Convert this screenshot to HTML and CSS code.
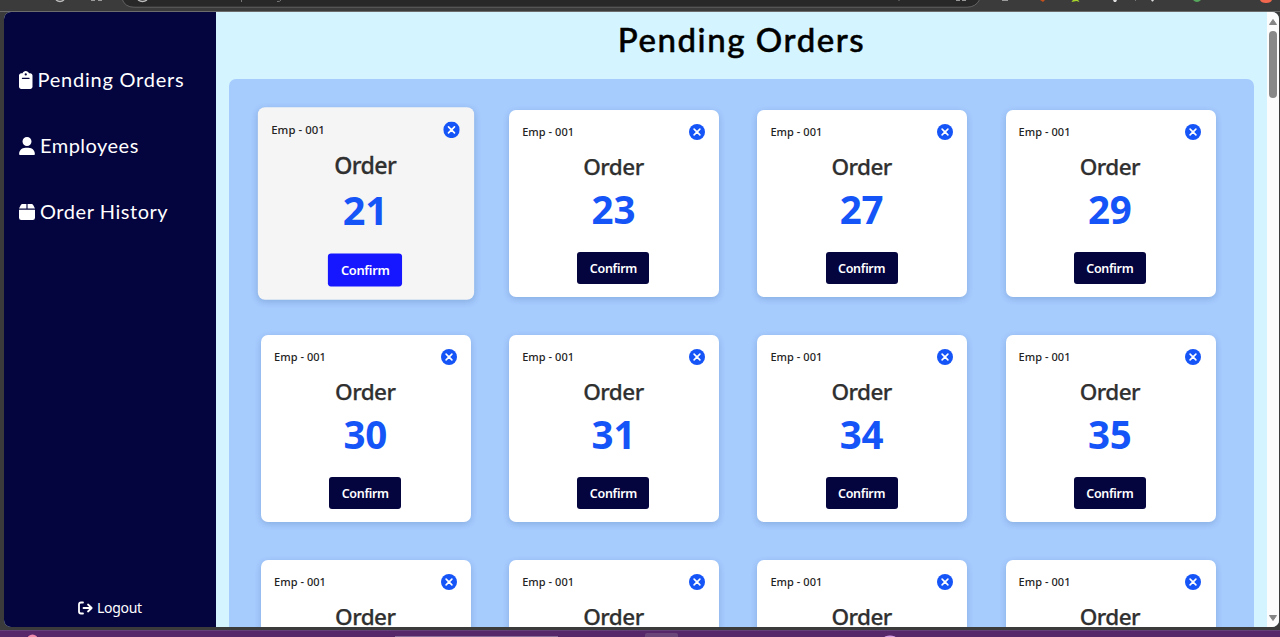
FILE: index.html
```html
<!DOCTYPE html>
<html lang="en">
<head>
<meta charset="utf-8">
<title>Pending Orders</title>
<link rel="stylesheet" href="styles.css">
</head>
<body>
<svg class="symbols" aria-hidden="true">
  <symbol id="close" viewBox="0 0 16 16"><circle cx="8" cy="8" r="8" fill="#1554f7"/><path d="M5.1 5.1l5.8 5.8M10.9 5.1l-5.8 5.8" stroke="#fff" stroke-width="1.6" stroke-linecap="round"/></symbol>
</svg>
<svg class="toolbar" viewBox="0 0 1280 12" aria-hidden="true">
  <rect y="11" width="1280" height="1" fill="#6c6c6c"/>
  <path d="M122 -1Q125 7.2 134 7.2H967Q976 7.2 980 -1Z" fill="#282828" stroke="#777" stroke-width=".7"/>
  <g fill="none" stroke="#bcbcbc" stroke-width="1.4">
    <path d="M56 0Q60 3 64 0M138 0Q142.500 3 147 0"/>
    <path d="M91 0h4M98 0h4M956 0h4M962 0h4M1002 0h6"/>
    <path d="M241.500 0v2M277 1.500Q280 2 281 0M899 0v1M1135.500 0v1" stroke="#777" stroke-width="1"/>
  </g>
  <path d="M1040 0h5l-2 2z" fill="#c4501c"/>
  <path d="M1071.500 2l2-3h4l2 3-3-1z" fill="#a9d62a"/>
  <path d="M1113 0h4l-1 2h-2zM1151 0h3l-1 1.500h-1z" fill="#ddd"/>
  <path d="M1193 0h8q-4 4-8 0z" fill="#55a85c"/>
  <path d="M1260 0h12q-1 3-6 3t-6-3z" fill="#f0674e"/>
</svg>
<div class="window">
  <nav class="sidebar">
    <ul class="menu">
      <li class="menu-item"><svg class="icon-clip" viewBox="0 0 384 512"><path fill="#fff" fill-rule="evenodd" d="M192 0c-42 0-77 27-90 64H64C29 64 0 93 0 128v320c0 35 29 64 64 64h256c35 0 64-29 64-64V128c0-35-29-64-64-64h-38C269 27 234 0 192 0zm0 64a32 32 0 110 64 32 32 0 010-64zM96 192h192q16 0 16 16t-16 16H96q-16 0-16-16t16-16z"/></svg><span class="wide">Pending Orders</span></li>
      <li class="menu-item"><svg class="icon-user" viewBox="0 0 448 512"><path fill="#fff" d="M224 256a128 128 0 100-256 128 128 0 000 256zm-46 48C80 304 0 384 0 482c0 16 13 30 30 30h388c17 0 30-14 30-30 0-98-80-178-178-178z"/></svg><span class="employees">Employees</span></li>
      <li class="menu-item"><svg class="icon-box" viewBox="0 0 448 448"><path fill="#fff" d="M51 26Q64 0 100 0h108v128H0zM240 0h108q36 0 49 26l51 102H240zM0 160h448v224q0 64-64 64H64q-64 0-64-64z"/></svg><span class="history">Order History</span></li>
    </ul>
    <div class="logout"><svg class="icon-logout" viewBox="0 0 15 14"><path d="M5 1.500H3Q1 1.500 1 3.500v7q0 2 2 2h2M5.500 7h8M10 3.500L13.700 7 10 10.500" fill="none" stroke="#fff" stroke-width="1.800" stroke-linecap="round" stroke-linejoin="round"/></svg><span>Logout</span></div>
  </nav>
  <main class="content">
    <h1 class="page-title"><span>Pending Orders</span></h1>
    <section class="board">
      <article class="card active"><header class="card-head"><span>Emp - 001</span><svg class="close"><use href="#close"/></svg></header><h2 class="label">Order</h2><p class="number">21</p><button class="confirm">Confirm</button></article>
      <article class="card"><header class="card-head"><span>Emp - 001</span><svg class="close"><use href="#close"/></svg></header><h2 class="label">Order</h2><p class="number">23</p><button class="confirm">Confirm</button></article>
      <article class="card"><header class="card-head"><span>Emp - 001</span><svg class="close"><use href="#close"/></svg></header><h2 class="label">Order</h2><p class="number">27</p><button class="confirm">Confirm</button></article>
      <article class="card"><header class="card-head"><span>Emp - 001</span><svg class="close"><use href="#close"/></svg></header><h2 class="label">Order</h2><p class="number">29</p><button class="confirm">Confirm</button></article>
      <article class="card"><header class="card-head"><span>Emp - 001</span><svg class="close"><use href="#close"/></svg></header><h2 class="label">Order</h2><p class="number">30</p><button class="confirm">Confirm</button></article>
      <article class="card"><header class="card-head"><span>Emp - 001</span><svg class="close"><use href="#close"/></svg></header><h2 class="label">Order</h2><p class="number">31</p><button class="confirm">Confirm</button></article>
      <article class="card"><header class="card-head"><span>Emp - 001</span><svg class="close"><use href="#close"/></svg></header><h2 class="label">Order</h2><p class="number">34</p><button class="confirm">Confirm</button></article>
      <article class="card"><header class="card-head"><span>Emp - 001</span><svg class="close"><use href="#close"/></svg></header><h2 class="label">Order</h2><p class="number">35</p><button class="confirm">Confirm</button></article>
      <article class="card"><header class="card-head"><span>Emp - 001</span><svg class="close"><use href="#close"/></svg></header><h2 class="label">Order</h2></article>
      <article class="card"><header class="card-head"><span>Emp - 001</span><svg class="close"><use href="#close"/></svg></header><h2 class="label">Order</h2></article>
      <article class="card"><header class="card-head"><span>Emp - 001</span><svg class="close"><use href="#close"/></svg></header><h2 class="label">Order</h2></article>
      <article class="card"><header class="card-head"><span>Emp - 001</span><svg class="close"><use href="#close"/></svg></header><h2 class="label">Order</h2></article>
    </section>
  </main>
  <div class="scrollbar">
    <svg class="arrow" viewBox="0 0 8 6"><path d="M4 .500L7.500 5.500H.500z" fill="#858585" stroke="#858585" stroke-linejoin="round"/></svg>
    <div class="thumb"></div>
    <svg class="arrow down" viewBox="0 0 8 6"><path d="M4 5.500L7.500.500H.500z" fill="#858585" stroke="#858585" stroke-linejoin="round"/></svg>
  </div>
</div>
<svg class="taskbar" viewBox="0 0 1280 7" aria-hidden="true">
  <rect width="1280" height="7" fill="#562769"/><rect width="1280" height="1" fill="#65417a"/>
  <circle cx="32.500" cy="10" r="5.500" fill="#f08bab"/>
  <rect x="395" y="6" width="163" height="1" fill="#8a6d98"/>
  <rect x="645" y="3" width="33" height="6" rx="2" fill="#6b4779"/>
  <ellipse cx="890" cy="8" rx="6" ry="2.500" fill="#d9a0e6"/>
</svg>
</body>
</html>
```
FILE: styles.css
```css
* { box-sizing: border-box; }
body { margin: 0; width: 1280px; height: 637px; overflow: hidden; display: flex; flex-direction: column; background: #3b3b3b; font-family: "Noto Sans", "Open Sans", sans-serif; }
h1, h2, p, ul { margin: 0; padding: 0; }
svg { display: block; flex: none; }
.symbols { display: none; }
.toolbar { width: 1280px; height: 12px; }
.window { width: 1275px; height: 615px; margin-left: 4px; display: flex; overflow: hidden; border-radius: 7px; background: #d4f5ff; }
.sidebar { width: 212px; flex: none; padding: 50px 0 9px 15px; display: flex; flex-direction: column; justify-content: space-between; background: #04043f; color: #fff; }
.menu { list-style: none; display: flex; flex-direction: column; gap: 30px; }
.menu-item { height: 36px; display: flex; align-items: center; font: 20px/36px Lato, sans-serif; white-space: nowrap; }
.menu-item span { margin-top: -2px; }
.icon-clip { width: 13.500px; height: 18px; margin-right: 5px; }
.icon-user { width: 16px; height: 18px; margin-right: 5px; }
.icon-box { width: 16px; height: 16px; margin-right: 5px; }
.wide { letter-spacing: .760px; }
.employees { letter-spacing: .480px; }
.history { letter-spacing: .550px; }
.logout { display: flex; align-items: center; gap: 4px; margin-left: 59px; font-size: 14px; line-height: 20px; letter-spacing: -.300px; }
.icon-logout { width: 15px; height: 14px; }
.content { width: 1051px; flex: none; padding: 0 13px; }
.page-title { height: 67px; padding-top: 7px; text-align: center; font: 500 33px/40px Lato, sans-serif; letter-spacing: 1.550px; color: #000; -webkit-text-stroke: .500px #000; }
.board { width: 1025px; height: 700px; padding: 31px 32px 0; display: grid; grid-template-columns: repeat(4, 210px); grid-auto-rows: 186.700px; gap: 38.500px 38.200px; align-content: start; border-radius: 7px 7px 0 0; background: #a6cbfd; }
.card { padding: 12px 14.500px 0 13px; display: flex; flex-direction: column; align-items: center; border-radius: 7px; background: #fff; box-shadow: 0 2px 6px rgba(20, 60, 120, .2); }
.card-head { align-self: stretch; height: 20px; display: flex; align-items: center; justify-content: space-between; font-size: 11px; font-weight: 500; line-height: 20px; letter-spacing: .050px; color: #222; }
.close { width: 16px; height: 16px; }
.label { height: 34px; margin-top: 8px; font-size: 22.500px; font-weight: 500; line-height: 34px; letter-spacing: -.550px; color: #303030; -webkit-text-stroke: .250px #303030; }
.number { height: 50px; font-size: 38.500px; font-weight: 700; line-height: 50px; letter-spacing: -.200px; color: #1554f7; }
.confirm { width: 72px; height: 32px; margin-top: 18px; padding: 2px 0 0; border: 0; border-radius: 3px; background: #04043f; color: #fff; font: 600 12.500px/30px "Noto Sans", sans-serif; letter-spacing: -.300px; }
.active { background: #f5f5f5; transform: scale(1.03); }
.active .confirm { background: #1717ff; }
.scrollbar { width: 12px; padding: 7px 2px 6px; display: flex; flex-direction: column; background: #fcfcfc; }
.arrow { width: 8px; height: 6px; }
.thumb { width: 8px; height: 67px; margin-top: 6px; border-radius: 4px; background: #888; }
.down { margin-top: auto; }
.taskbar { width: 1280px; height: 7px; margin-top: 3px; }
```
